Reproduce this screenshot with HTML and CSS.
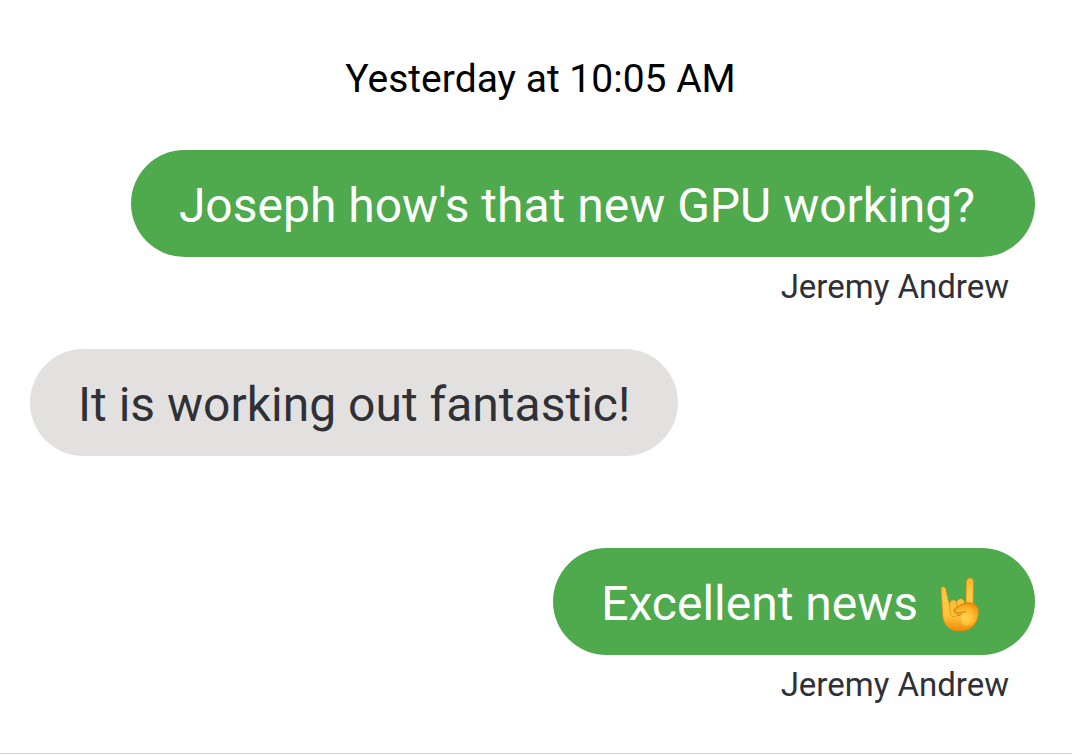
FILE: index.html
```html
<!DOCTYPE html>
<html lang="en">
<head>
<meta charset="utf-8">
<meta name="viewport" content="width=device-width, initial-scale=1">
<title>Messages</title>
<link rel="stylesheet" href="styles.css">
</head>
<body>
<main class="chat">
<time class="chat-date">Yesterday at 10:05 AM</time>
<article class="message message-sent">
<p class="bubble bubble-question">Joseph how's that new GPU working?</p>
<span class="sender">Jeremy Andrew</span>
</article>
<article class="message message-received">
<p class="bubble">It is working out fantastic!</p>
</article>
<article class="message message-sent">
<p class="bubble">Excellent news <svg class="emoji" viewBox="28 34 171 162" role="img" aria-label="Sign of the horns">
<defs>
<linearGradient id="skin" x1="0" y1="0" x2="0" y2="1"><stop offset="0" stop-color="#f7b62d"/><stop offset=".35" stop-color="#ffcb45"/><stop offset=".72" stop-color="#ffc13a"/><stop offset="1" stop-color="#e98b08"/></linearGradient>
<radialGradient id="thumb" cx=".45" cy=".65" r=".65"><stop offset="0" stop-color="#ffd957"/><stop offset=".55" stop-color="#fdb930"/><stop offset="1" stop-color="#ed970e"/></radialGradient>
</defs>
<path d="M61 70Q61 63 68 63Q75 63 76 72L83 104L88 119L136 111L137 48Q138 37 148 37Q159 38 159 49L157 112Q172 120 173 137Q173 165 157 182Q141 197 118 197Q92 197 78 181Q66 168 66 148Z" fill="url(#skin)" stroke="#d98208" stroke-width="2"/>
<path d="M86 119Q87 105 97 103Q105 102 108 110L113 141Q112 151 102 153Q94 154 90 148Z" fill="#fdbf38" stroke="#d98a12" stroke-width="2"/>
<path d="M108 112Q109 100 119 99Q130 99 132 111L131 130L112 137Z" fill="#ffc13a" stroke="#d98a12" stroke-width="2"/>
<path d="M103 129C116 118 133 110 148 112C168 116 174 129 172 145C168 165 154 177 137 181C123 177 118 164 123 151L134 138C124 136 112 145 105 142C99 140 98 134 103 129Z" fill="url(#thumb)"/>
<path d="M136 138C125 137 114 146 105 142C99 140 98 134 103 129C117 119 132 110 148 112C158 114 166 119 170 126M121 144Q119 151 112 150" fill="none" stroke="#cb7a0b" stroke-width="3" stroke-linecap="round"/>
</svg></p>
<span class="sender">Jeremy Andrew</span>
</article>
</main>
</body>
</html>
```
FILE: styles.css
```css
* { box-sizing: border-box; }
body { margin: 0; background: #fff; color: #303136; font-family: Roboto, sans-serif; }
.chat { display: flex; flex-direction: column; min-height: 100vh; padding: 56px 37px 0 30px; border-bottom: 1px solid #d8d8d8; }
.chat-date { align-self: center; margin: 0 0 48px 16px; color: #000; font-size: 39px; line-height: 46px; }
.message { display: flex; flex-direction: column; min-height: 199px; }
.message-sent { align-items: flex-end; }
.message-received { align-items: flex-start; }
.bubble { margin: 0; padding: 28px 48px 23px; border-radius: 54px; font-size: 48px; line-height: 56px; }
.bubble-question { padding-right: 60px; }
.message-sent .bubble { background: #4fa94d; color: #fff; }
.message-received .bubble { background: #e2e1e0; }
.emoji { width: 57px; height: 54px; vertical-align: -11px; }
.sender { margin: 10px 26px 0 0; font-size: 33px; line-height: 40px; }
```
